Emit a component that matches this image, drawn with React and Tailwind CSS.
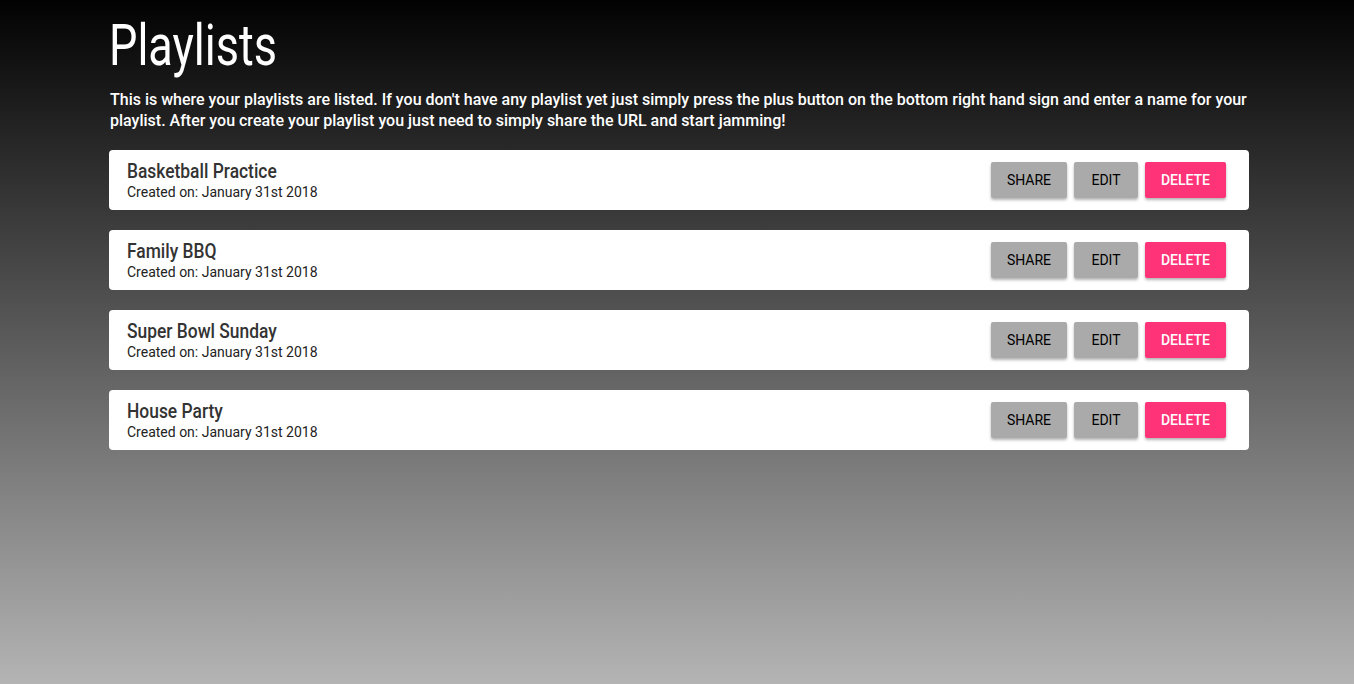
export default function App() {
  const items = ["Basketball Practice", "Family BBQ", "Super Bowl Sunday", "House Party"];
  return (
    <div className="min-h-[684px] w-full bg-[linear-gradient(to_bottom,#020202_0%,#b4b4b4_100%)] font-['Roboto',sans-serif]">
      <div className="ml-[109px] w-[1140px] pt-[14px]">
        <h1 className="origin-left scale-x-[0.79] text-[57px] leading-[64px] font-normal text-white whitespace-nowrap">Playlists</h1>
        <p className="mt-[11px] text-[16px] leading-[21px] font-medium text-white pl-px">
          This is where your playlists are listed. If you don't have any playlist yet just simply press the plus button on the bottom right hand sign and enter a name for your playlist. After you create your playlist you just need to simply share the URL and start jamming!
        </p>
        <div className="mt-[19px] flex flex-col gap-[20px]">
          {items.map((name) => (
            <div key={name} className="flex h-[60px] items-center justify-between rounded-[4px] bg-white pl-[18px] pr-[23px]">
              <div className="flex flex-col">
                <div className="origin-left scale-x-[0.87] text-[20px] leading-[24px] font-medium text-[#333] whitespace-nowrap">{name}</div>
                <div className="text-[14px] leading-[18px] text-[#222]">Created on: January 31st 2018</div>
              </div>
              <div className="flex gap-[7px]">
                <button className="h-[36px] w-[76px] rounded-[2px] bg-[#aaaaaa] text-[14px] font-normal text-black shadow-[0_2px_3px_rgba(0,0,0,0.3)]">SHARE</button>
                <button className="h-[36px] w-[64px] rounded-[2px] bg-[#aaaaaa] text-[14px] font-normal text-black shadow-[0_2px_3px_rgba(0,0,0,0.3)]">EDIT</button>
                <button className="h-[36px] w-[81px] rounded-[2px] bg-[#ff3378] text-[14px] font-medium text-white shadow-[0_2px_3px_rgba(0,0,0,0.3)]">DELETE</button>
              </div>
            </div>
          ))}
        </div>
      </div>
    </div>
  );
}
